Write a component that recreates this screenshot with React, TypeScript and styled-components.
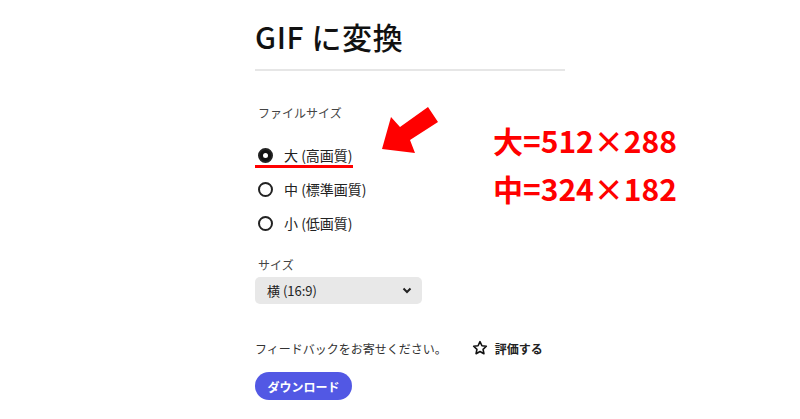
import React from "react";
import styled, { createGlobalStyle } from "styled-components";

const Global = createGlobalStyle`
  html, body { margin: 0; padding: 0; background: #fff; }
  body { font-family: "Noto Sans CJK JP", "Noto Sans", sans-serif; color: #222; }
`;

const Page = styled.div`
  position: relative;
  width: 800px;
  height: 419px;
  overflow: hidden;
  padding-left: 255px;
  box-sizing: border-box;
`;

const Column = styled.div`
  width: 310px;
  display: flex;
  flex-direction: column;
`;

const Title = styled.h1`
  margin: 15px 0 0;
  font-size: 30px;
  line-height: 42px;
  font-weight: 500;
  letter-spacing: 0.6px;
  color: #111;
`;

const Divider = styled.div`
  margin-top: 12px;
  height: 2px;
  background: #e6e6e6;
`;

const Label = styled.div<{ $mt: number }>`
  margin-top: ${(p) => p.$mt}px;
  padding-left: 3px;
  font-size: 12px;
  line-height: 16px;
  color: #444;
`;

const RadioGroup = styled.div`
  margin-top: 17px;
  display: flex;
  flex-direction: column;
`;

const Row = styled.div`
  position: relative;
  height: 34px;
  display: flex;
  align-items: center;
  padding-left: 3px;
  gap: 11px;
  font-size: 14px;
  color: #222;
`;

const Circle = styled.span<{ $on?: boolean }>`
  width: 15px;
  height: 15px;
  box-sizing: border-box;
  border-radius: 50%;
  border: 2px solid #222;
  background: ${(p) => (p.$on ? "#111" : "#fff")};
  display: flex;
  align-items: center;
  justify-content: center;
  &::after {
    content: "";
    display: ${(p) => (p.$on ? "block" : "none")};
    width: 5px;
    height: 5px;
    border-radius: 50%;
    background: #fff;
  }
`;

const Underline = styled.span`
  position: absolute;
  left: 0;
  top: 27px;
  width: 98px;
  height: 3px;
  background: #ff0000;
`;

const Select = styled.div`
  margin-top: 4px;
  width: 167px;
  height: 27px;
  border-radius: 5px;
  background: #e8e8e8;
  box-sizing: border-box;
  padding: 0 10px 0 12px;
  display: flex;
  align-items: center;
  justify-content: space-between;
  font-size: 13px;
  color: #222;
`;

const Feedback = styled.div`
  margin-top: 34px;
  height: 20px;
  display: flex;
  align-items: center;
  font-size: 12px;
  color: #333;
`;

const Rate = styled.div`
  margin-left: 25px;
  display: flex;
  align-items: center;
  gap: 7px;
  font-weight: 700;
  color: #222;
`;

const Button = styled.button`
  margin-top: 14px;
  width: 97px;
  height: 28px;
  border: none;
  border-radius: 14px;
  background: #5258e4;
  color: #fff;
  font-family: "Noto Sans CJK JP", sans-serif;
  font-weight: 700;
  font-size: 12px;
  padding: 0;
`;

const Note = styled.div`
  position: absolute;
  left: 493px;
  top: 116px;
  color: #ff0000;
  font-size: 30px;
  font-weight: 700;
  line-height: 48px;
`;

const Arrow = styled.svg`
  position: absolute;
  left: 375px;
  top: 95px;
`;

export default function App() {
  return (
    <Page>
      <Global />
      <Column>
        <Title>GIF に変換</Title>
        <Divider />
        <Label $mt={34}>ファイルサイズ</Label>
        <RadioGroup>
          <Row>
            <Circle $on />
            <span>大 (高画質)</span>
            <Underline />
          </Row>
          <Row>
            <Circle />
            <span>中 (標準画質)</span>
          </Row>
          <Row>
            <Circle />
            <span>小 (低画質)</span>
          </Row>
        </RadioGroup>
        <Label $mt={17}>サイズ</Label>
        <Select>
          <span>横 (16:9)</span>
          <svg width="10" height="7" viewBox="0 0 10 7">
            <path d="M1.5 1.5 L5 5 L8.5 1.5" fill="none" stroke="#222" strokeWidth="2" />
          </svg>
        </Select>
        <Feedback>
          <span>フィードバックをお寄せください。</span>
          <Rate>
            <svg width="16" height="16" viewBox="0 0 24 24">
              <path
                d="M12 2.5l2.9 6.1 6.6.8-4.9 4.6 1.3 6.6L12 17.3l-5.9 3.3 1.3-6.6-4.9-4.6 6.6-.8z"
                fill="none"
                stroke="#111"
                strokeWidth="2.4"
                strokeLinejoin="round"
              />
            </svg>
            <span>評価する</span>
          </Rate>
        </Feedback>
        <div>
          <Button>ダウンロード</Button>
        </div>
      </Column>
      <Arrow width="70" height="70" viewBox="0 0 70 70">
        <polygon points="7,54 16,22 25,32 53,12 63,27 35,45 40,58" fill="#ff0000" />
      </Arrow>
      <Note>
        <div>大=512×288</div>
        <div>中=324×182</div>
      </Note>
    </Page>
  );
}
